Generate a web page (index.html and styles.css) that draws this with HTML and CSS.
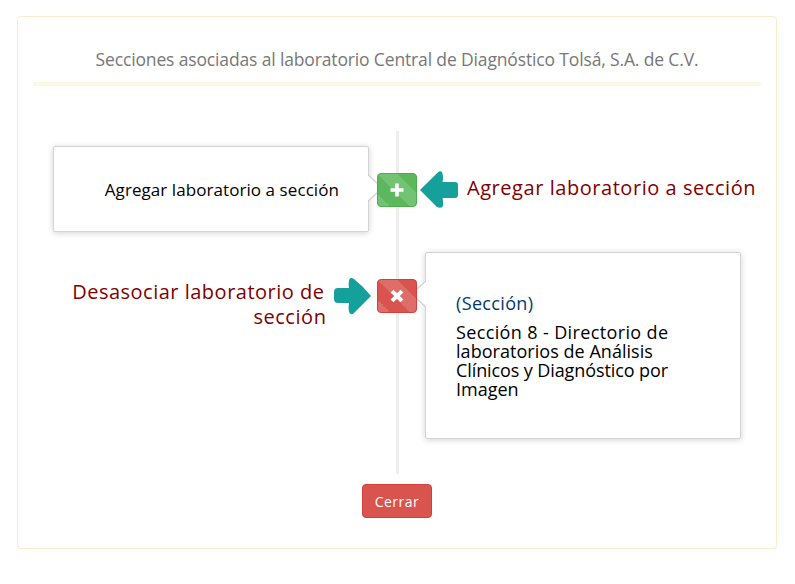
FILE: index.html
```html
<!DOCTYPE html>
<html lang="es">
<head>
<meta charset="utf-8">
<title>Secciones asociadas</title>
<link rel="stylesheet" href="styles.css">
</head>
<body>
<main class="panel">
  <h1 class="heading"><span>Secciones asociadas al laboratorio Central de Diagnóstico Tolsá, S.A. de C.V.</span></h1>
  <section class="timeline">
    <div class="row row-add">
      <div class="card card-left"><span class="add-text">Agregar laboratorio a sección</span></div>
      <button class="badge badge-success" aria-label="Agregar"><svg width="14" height="14" viewBox="0 0 14 14"><path d="M5.2 .5h3.6v4.7h4.7v3.6H8.8v4.7H5.2V8.8H.5V5.2h4.7z"/></svg></button>
      <div class="note note-right">
        <svg class="arrow" width="38" height="38" viewBox="0 0 38 38"><path d="M0 19L18 1.2Q20-.5 22 1Q23.8 5 22.5 11H35Q38 11 38 14V24Q38 27 35 27H22.5Q23.8 32 22.5 36Q20 37.5 17 36Z"/></svg>
        <span class="note-add">Agregar laboratorio a sección</span>
      </div>
    </div>
    <div class="row row-remove">
      <div class="note note-left">
        <p class="note-text"><span class="note-line1">Desasociar laboratorio de</span><span class="note-line2">sección</span></p>
        <svg class="arrow" width="37" height="37" viewBox="0 0 37 37"><path d="M37 18Q30 9 20 1Q17-.8 15.5 1Q14 5 15 10H4Q0 10 0 14V21Q0 25 4 25H15Q14 32 15.5 35Q18 37.5 20 35Z"/></svg>
      </div>
      <button class="badge badge-danger" aria-label="Desasociar"><svg width="14" height="14" viewBox="0 0 14 14"><path transform="rotate(45 7 7)" d="M5 0h4v5h5v4H9v5H5V9H0V5h5z"/></svg></button>
      <div class="card card-right">
        <h2 class="card-title"><span>(Sección)</span></h2>
        <p class="card-body"><span class="l1">Sección 8 - Directorio de</span><span class="l2">laboratorios de Análisis</span><span class="l3">Clínicos y Diagnóstico por</span><span class="l4">Imagen</span></p>
      </div>
    </div>
  </section>
  <button class="close"><span>Cerrar</span></button>
</main>
</body>
</html>
```
FILE: styles.css
```css
* { box-sizing: border-box; }
body { margin: 0; background: #fff; font-family: "Comic Sans MS", "Open Sans", sans-serif; }
button { font-family: inherit; padding: 0; }
h1, h2, p { margin: 0; font-weight: 400; }
span { white-space: nowrap; }

.panel {
  width: 760px; height: 533px; margin: 16px 0 0 17px; padding: 0 15px;
  border: 1px solid #faebcc; border-radius: 4px;
  box-shadow: 0 1px 1px rgba(0, 0, 0, .05);
}
.heading {
  height: 69px; padding-top: 30px; text-align: center;
  border-bottom: 4px solid #fcf8e3;
  color: #777; font-size: 17.5px; line-height: 24px; letter-spacing: -.145px;
}
.timeline {
  height: 343px; margin-top: 45px; padding: 15px 20px 0;
  background: linear-gradient(#eee, #eee) 363px 0 / 3px 100% no-repeat;
}
.row { display: grid; grid-template-columns: 316px 40px 316px; column-gap: 8px; align-items: start; }
.row-remove { margin-top: 20px; }

.card {
  position: relative; background: #fff;
  border: 1px solid #d4d4d4; border-radius: 2px;
  box-shadow: 0 1px 6px rgba(0, 0, 0, .175);
}
.card-left { height: 86px; padding: 31px 29px 0; text-align: right; font-size: 17px; line-height: 24px; letter-spacing: .07px; }
.card-right { height: 187px; padding: 38px 30px 0; }
.card::after {
  content: ""; position: absolute; top: 27px; width: 15px; height: 28px;
  background: #ccc;
}
.card-left::after { right: -15px; clip-path: polygon(0 0, 100% 50%, 0 100%, 0 calc(100% - 1.5px), calc(100% - 1.5px) 50%, 0 1.5px); }
.card-right::after { left: -15px; clip-path: polygon(100% 0, 0 50%, 100% 100%, 100% calc(100% - 1.5px), 1.5px 50%, 100% 1.5px); }
.card::before {
  content: ""; position: absolute; top: 28px; width: 14px; height: 26px; background: #fff;
}
.card-left::before { right: -14px; clip-path: polygon(0 0, 100% 50%, 0 100%); }
.card-right::before { left: -14px; clip-path: polygon(100% 0, 0 50%, 100% 100%); }

.badge {
  position: relative; z-index: 1;
  display: flex; align-items: center; justify-content: center;
  width: 40px; height: 34px; margin-top: 27px; border: 1px solid; border-radius: 4px;
  background-image: linear-gradient(45deg, rgba(255,255,255,.15) 25%, transparent 25% 50%, rgba(255,255,255,.15) 50% 75%, transparent 75%);
  background-size: 40px 40px;
}
.badge svg { fill: #fff; }
.badge-success { border-color: #4cae4c; background-color: #5cb85c; }
.badge-danger { border-color: #d43f3a; background-color: #d9534f; }

.note { display: flex; color: #800000; font-size: 20px; line-height: 25px; letter-spacing: .55px; }
.note-right { margin: 25px 0 0 -5px; gap: 9px; }
.note-add { margin-top: 4px; }
.note-left { margin: 26px -2px 0 0; justify-content: flex-end; gap: 7.5px; }
.note-text { text-align: right; margin-top: 1px; }
.note-text span { display: block; }
.note-line1 { margin-right: 2px; letter-spacing: .5px; }
.arrow { flex: none; fill: #16a09b; }

.card-title { color: #003a6c; font-size: 18px; line-height: 24px; letter-spacing: .35px; }
.card-body { margin-top: 8px; color: #000; font-size: 18px; line-height: 19px; }
.card-body span { display: block; }
.l1 { letter-spacing: .37px; }
.l2 { letter-spacing: .04px; }
.l3 { letter-spacing: -.1px; }

.close {
  display: block; width: 70px; height: 34px; margin: 10px auto 0 329px;
  border: 1px solid #d43f3a; border-radius: 4px;
  background: #d9534f; color: #fff; font-size: 14px; letter-spacing: .5px;
}
```
